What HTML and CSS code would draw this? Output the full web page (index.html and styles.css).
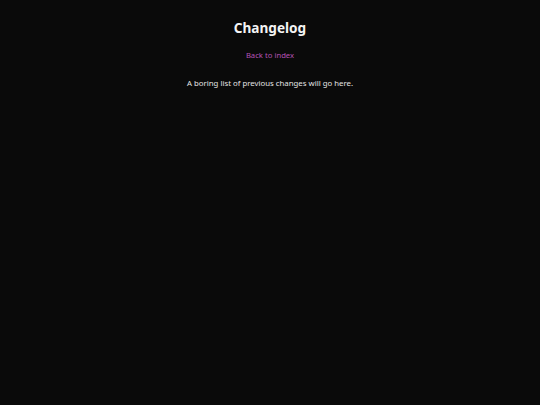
FILE: index.html
```html
<!DOCTYPE html>
<html>
<head>
<meta charset="utf-8">
<link rel="stylesheet" href="styles.css">
</head>
<body>
<main class="page">
  <h1 class="title">Changelog</h1>
  <a class="back" href="#">Back to index</a>
  <p class="text">A boring list of previous changes will go here.</p>
</main>
</body>
</html>
```
FILE: styles.css
```css
html, body {
  margin: 0;
  padding: 0;
  background: #0a0a0a;
  color: #e4e4e4;
  font-family: "Noto Sans", "Open Sans", sans-serif;
}
.page {
  display: flex;
  flex-direction: column;
  align-items: center;
  padding-top: 18px;
}
.title {
  margin: 0;
  font-size: 13.6px;
  font-weight: 700;
  line-height: 20px;
  color: #f4f4f4;
}
.back {
  margin-top: 11px;
  font-size: 7.7px;
  line-height: 12px;
  color: #b452b4;
  text-decoration: none;
}
.text {
  margin: 16px 0 0;
  font-size: 7.8px;
  line-height: 12px;
}
```
